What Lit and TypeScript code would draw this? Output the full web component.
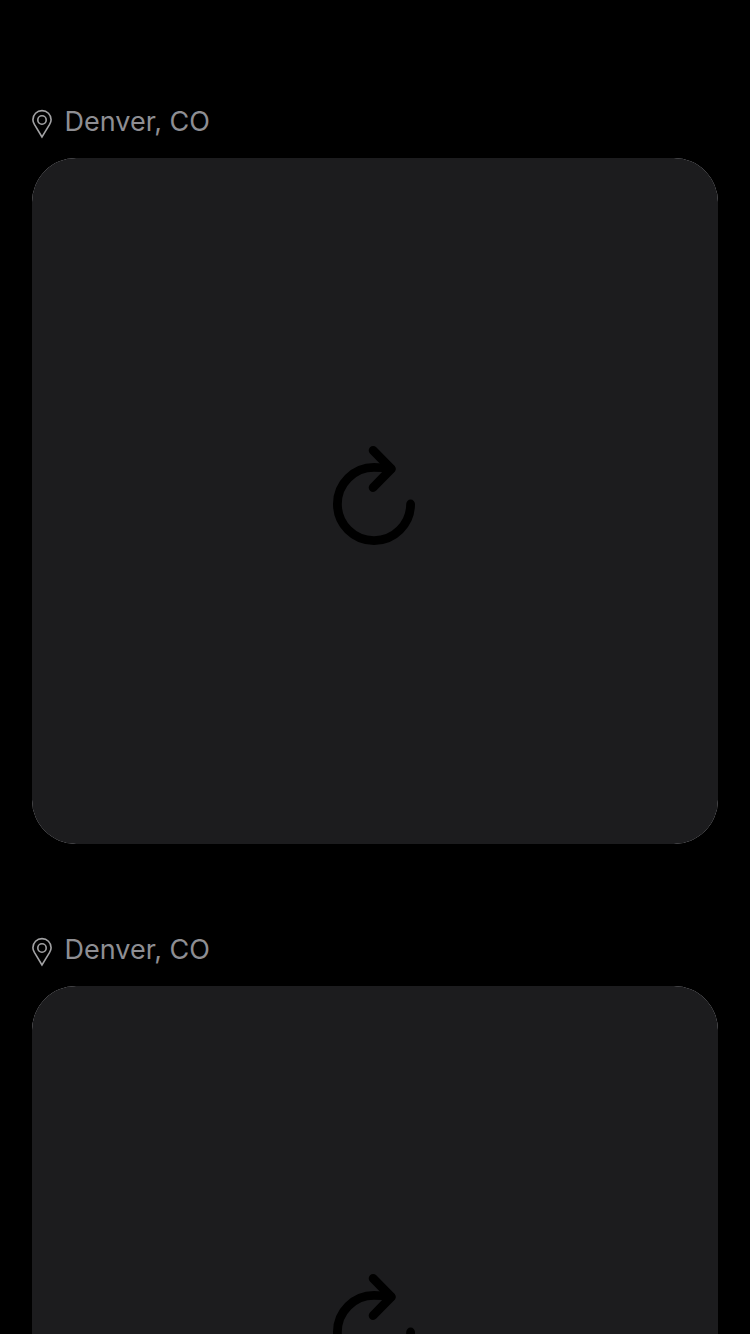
import { LitElement, html, css } from "lit";
import { customElement, property } from "lit/decorators.js";

@customElement("location-post")
class LocationPost extends LitElement {
  @property() place = "";

  static styles = css`
    :host { display: block; }
    .place {
      display: flex;
      align-items: center;
      height: 36px;
      margin-bottom: 18px;
      color: #8e8e93;
    }
    .pin { display: block; width: 20px; height: 30px; margin: 4px 12.5px 0 0; flex: none; color: #a2a2a4; }
    .name {
      font: 400 27px/36px Inter, "Liberation Sans", sans-serif;
      white-space: nowrap;
    }
    .frame { height: 686px; border-radius: 44px; background: #8e8e93; overflow: hidden; }
    .card {
      display: flex;
      align-items: center;
      justify-content: center;
      height: 686px;
      border-radius: 44px;
      background: #1c1c1e;
    }
    .reload { display: block; width: 110px; height: 120px; margin-top: -12px; }
  `;

  render() {
    return html`
      <div class="place">
        <svg class="pin" viewBox="0 0 20 30" fill="none" stroke="currentColor" stroke-width="1.6">
          <path d="M10 28L2.4 15.4C1.5 13.8 0.9 12.2 0.9 10.7A9.1 9.1 0 0 1 19.1 10.7C19.1 12.2 18.5 13.8 17.6 15.4Z" />
          <circle cx="10" cy="11" r="4.2" />
        </svg>
        <span class="name">${this.place}</span>
      </div>
      <div class="frame">
        <div class="card">
          <svg class="reload" viewBox="0 0 110 120" fill="none" stroke="#000" stroke-width="8.8"
            stroke-linecap="round" stroke-linejoin="round">
            <path d="M90.6 69A36.6 36.6 0 1 1 54 32.4Q62 32.4 71 33.9" />
            <path d="M53.1 15.3L71.3 33.9L53.1 52.5" />
          </svg>
        </div>
      </div>
    `;
  }
}

@customElement("app-root")
class AppRoot extends LitElement {
  static styles = css`
    :host { display: block; height: 1334px; overflow: hidden; background: #000; }
    .feed { display: flex; flex-direction: column; gap: 88px; padding: 104px 32px 0; }
  `;

  render() {
    return html`
      <main class="feed">
        <location-post place="Denver, CO"></location-post>
        <location-post place="Denver, CO"></location-post>
      </main>
    `;
  }
}
